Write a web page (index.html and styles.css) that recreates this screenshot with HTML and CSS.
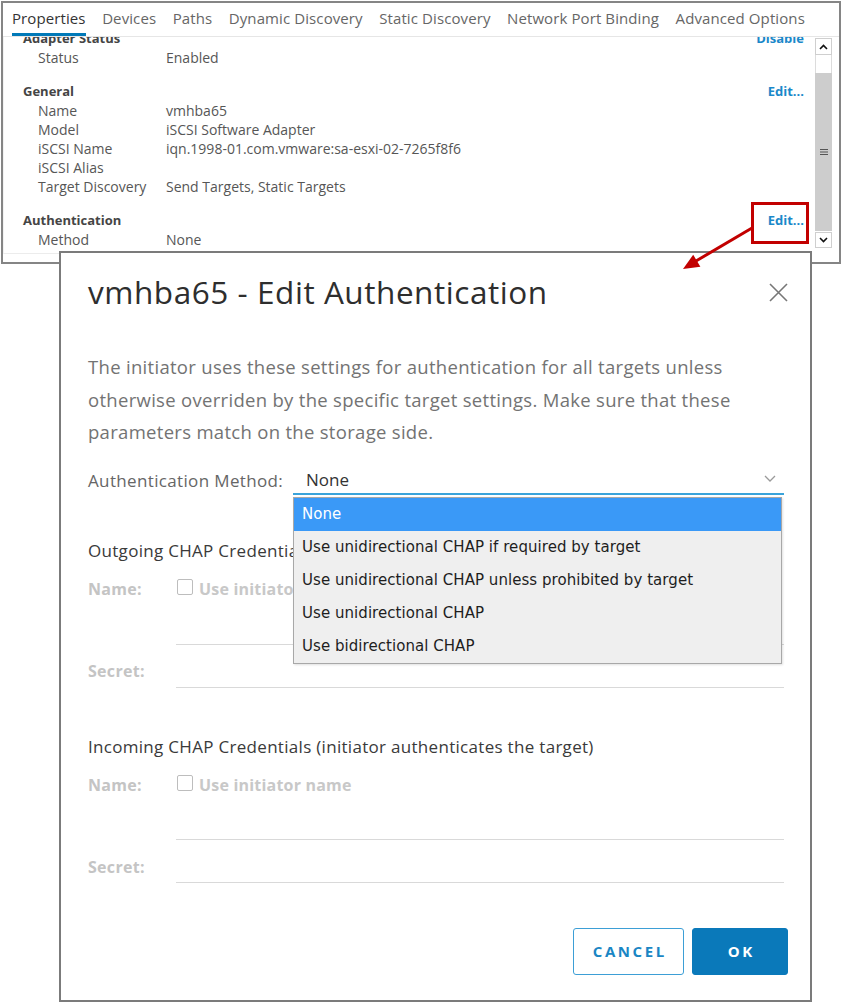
FILE: index.html
```html
<!DOCTYPE html>
<html lang="en">
<head>
<meta charset="utf-8">
<title>vmhba65 - Edit Authentication</title>
<link rel="stylesheet" href="styles.css">
</head>
<body>
<div class="page">
  <div class="panel">
    <nav class="tabs">
      <span class="tab active">Properties</span>
      <span class="tab">Devices</span>
      <span class="tab">Paths</span>
      <span class="tab">Dynamic Discovery</span>
      <span class="tab">Static Discovery</span>
      <span class="tab">Network Port Binding</span>
      <span class="tab">Advanced Options</span>
    </nav>
    <div class="panel-body">
      <div class="props">
        <div class="props-inner">
          <section class="sec">
            <div class="sec-head"><span class="sec-title">Adapter Status</span><span class="link">Disable</span></div>
            <div class="row"><span class="k">Status</span><span class="v">Enabled</span></div>
          </section>
          <section class="sec">
            <div class="sec-head"><span class="sec-title">General</span><span class="link">Edit...</span></div>
            <div class="row"><span class="k">Name</span><span class="v">vmhba65</span></div>
            <div class="row"><span class="k">Model</span><span class="v">iSCSI Software Adapter</span></div>
            <div class="row"><span class="k">iSCSI Name</span><span class="v">iqn.1998-01.com.vmware:sa-esxi-02-7265f8f6</span></div>
            <div class="row"><span class="k">iSCSI Alias</span><span class="v"></span></div>
            <div class="row"><span class="k">Target Discovery</span><span class="v">Send Targets, Static Targets</span></div>
          </section>
          <section class="sec">
            <div class="sec-head"><span class="sec-title">Authentication</span><span class="link">Edit...</span></div>
            <div class="row"><span class="k">Method</span><span class="v">None</span></div>
          </section>
        </div>
      </div>
      <div class="scrollbar">
        <div class="sb-btn"><svg width="9" height="6" viewBox="0 0 9 6"><polyline points="1,5 4.5,1.5 8,5" fill="none" stroke="#111" stroke-width="1.6"/></svg></div>
        <div class="sb-track"></div>
        <div class="sb-thumb"><svg width="8" height="8" viewBox="0 0 8 8"><path d="M0 1.5H8M0 4H8M0 6.5H8" stroke="#555" stroke-width="1.2"/></svg></div>
        <div class="sb-btn down"><svg width="9" height="6" viewBox="0 0 9 6"><polyline points="1,1 4.5,4.5 8,1" fill="none" stroke="#111" stroke-width="1.6"/></svg></div>
      </div>
    </div>
  </div>

  <div class="modal">
    <div class="modal-head">
      <h1 class="modal-title">vmhba65 - Edit Authentication</h1>
      <svg class="close" width="19" height="19" viewBox="0 0 19 19"><path d="M1 1L18 18M18 1L1 18" stroke="#777" stroke-width="1.6"/></svg>
    </div>
    <p class="desc">The initiator uses these settings for authentication for all targets unless otherwise overriden by the specific target settings. Make sure that these parameters match on the storage side.</p>
    <div class="method-row">
      <span class="method-label">Authentication Method:</span>
      <div class="select">
        <span class="select-value">None</span>
        <svg class="chev" width="12" height="7" viewBox="0 0 12 7"><polyline points="1,1 6,6 11,1" fill="none" stroke="#9a9a9a" stroke-width="1.3"/></svg>
        <ul class="dropdown">
          <li class="opt selected">None</li>
          <li class="opt">Use unidirectional CHAP if required by target</li>
          <li class="opt">Use unidirectional CHAP unless prohibited by target</li>
          <li class="opt">Use unidirectional CHAP</li>
          <li class="opt">Use bidirectional CHAP</li>
        </ul>
      </div>
    </div>

    <h2 class="cred-title first">Outgoing CHAP Credentials (target authenticates the initiator)</h2>
    <div class="field-row"><span class="f-label">Name:</span><span class="check"></span><span class="check-label">Use initiator name</span></div>
    <div class="line-input name-input"></div>
    <div class="secret-row"><span class="f-label">Secret:</span><div class="line-input secret-input"></div></div>

    <h2 class="cred-title second">Incoming CHAP Credentials (initiator authenticates the target)</h2>
    <div class="field-row"><span class="f-label">Name:</span><span class="check"></span><span class="check-label">Use initiator name</span></div>
    <div class="line-input name-input short"></div>
    <div class="secret-row last"><span class="f-label">Secret:</span><div class="line-input secret-input short"></div></div>

    <div class="actions">
      <button class="btn btn-outline">CANCEL</button>
      <button class="btn btn-primary">OK</button>
    </div>
  </div>

  <div class="callout"></div>
  <svg class="arrow" width="90" height="60" viewBox="0 0 90 60">
    <line x1="77" y1="13" x2="21" y2="46" stroke="#c20000" stroke-width="3"/>
    <polygon points="8,54 25.4,51.8 18.2,39.8" fill="#c20000"/>
  </svg>
</div>
</body>
</html>
```

FILE: styles.css
```css
* { box-sizing: border-box; }
html, body { margin: 0; padding: 0; background: #fff; }
body { font-family: "Open Sans", Lato, sans-serif; color: #333; }

.page { position: relative; width: 843px; height: 1002px; overflow: hidden; }

/* ---------- top properties panel ---------- */
.panel {
  margin: 1px 0 0 1px;
  width: 840px;
  height: 263px;
  border: 2px solid #858585;
  background: #fff;
  display: flex;
  flex-direction: column;
}
.tabs {
  display: flex;
  gap: 16.5px;
  padding-left: 9px;
  height: 34px;
  border-bottom: 1px solid #e6e6e6;
  flex-shrink: 0;
}
.tab {
  font-size: 15px;
  letter-spacing: 0.1px;
  line-height: 28px;
  padding-top: 1px;
  height: 33px;
  color: #666;
  border-bottom: 3px solid transparent;
  white-space: nowrap;
}
.tab.active { color: #333; border-bottom-color: #0079b8; }

.panel-body { display: flex; flex: 1; min-height: 0; }
.props {
  width: 808px;
  height: 217px;
  overflow: hidden;
  border-bottom: 1px solid #ececec;
  border-left: 1px solid #f2f2f2;
}
.props-inner { margin-top: -8px; padding: 0 7px 0 19px; }
.sec { margin-bottom: 15px; }
.sec-head { display: flex; justify-content: space-between; line-height: 19px; }
.sec-title { font-size: 13px; font-weight: 700; color: #454545; }
.link { font-size: 13px; font-weight: 700; color: #1b88c9; }
.row { display: flex; line-height: 19px; font-size: 14px; color: #565656; padding-left: 15px; }
.k { width: 128px; flex-shrink: 0; }

.scrollbar {
  margin: 1px 0 0 4px;
  width: 17px;
  height: 210px;
  display: flex;
  flex-direction: column;
}
.sb-btn {
  height: 17px;
  border: 1px solid #cfcfcf;
  background: #fff;
  display: flex;
  align-items: center;
  justify-content: center;
}
.sb-btn.down { height: 16px; margin-top: 1px; }
.sb-track { height: 18px; border-left: 1px solid #dcdcdc; border-right: 1px solid #dcdcdc; background: #fff; }
.sb-thumb {
  flex: 1;
  background: #cdcdcd;
  display: flex;
  align-items: center;
  justify-content: center;
}

/* ---------- modal ---------- */
.modal {
  position: absolute;
  left: 59px;
  top: 251px;
  width: 753px;
  height: 751px;
  border: 2px solid #7b7b7b;
  background: #fff;
  padding: 19px 22px 0 27px;
  z-index: 2;
}
.modal-head { display: flex; justify-content: space-between; align-items: center; height: 40px; }
.modal-title { margin: 0; font-size: 31.5px; font-weight: 400; color: #2e2e2e; line-height: 40px; letter-spacing: 0.55px; }
.close { flex-shrink: 0; }

.desc {
  margin: 39px 0 0 0;
  font-size: 18.5px;
  line-height: 32.5px;
  color: #737373;
  width: 700px;
  letter-spacing: 0.3px;
}

.method-row { display: flex; margin-top: 18px; height: 28px; }
.method-label { width: 205px; font-size: 17px; line-height: 28px; color: #666; letter-spacing: 0.35px; flex-shrink: 0; }
.select {
  position: relative;
  flex: 1;
  margin-right: 4px;
  height: 28px;
  border-bottom: 2px solid #3aa3da;
  display: flex;
  align-items: center;
  justify-content: space-between;
  padding: 0 8px 0 13px;
}
.select-value { font-size: 17px; line-height: 26px; color: #333; }
.chev { margin-bottom: 2px; }

.dropdown {
  position: absolute;
  left: 0;
  top: 30px;
  width: 489px;
  margin: 0;
  padding: 0;
  list-style: none;
  background: #efefef;
  border: 1px solid #a8a8a8;
  box-shadow: 1px 1px 2px rgba(0,0,0,0.12);
  z-index: 3;
}
.opt {
  height: 33px;
  line-height: 33px;
  padding-left: 8px;
  font-family: "DejaVu Sans", Verdana, sans-serif;
  font-size: 15px;
  letter-spacing: 0.05px;
  color: #1e1e1e;
  white-space: nowrap;
}
.opt.selected { background: #3a99f7; color: #fff; }

.cred-title { margin: 0; font-size: 17px; font-weight: 400; line-height: 22px; color: #3a3a3a; letter-spacing: 0.3px; white-space: nowrap; }
.cred-title.first { margin-top: 45px; }
.cred-title.second { margin-top: 48px; }

.field-row { display: flex; align-items: center; margin-top: 16px; height: 22px; }
.f-label { width: 89px; flex-shrink: 0; font-size: 16px; font-weight: 700; color: #c4c4c4; line-height: 24px; letter-spacing: 0.3px; }
.check { width: 16px; height: 16px; border: 1px solid #bdbdbd; border-radius: 2px; margin-top: -3px; flex-shrink: 0; }
.check-label { margin-left: 6px; font-size: 16px; font-weight: 700; color: #c8c8c8; letter-spacing: 0.2px; }

.line-input { border-bottom: 1px solid #d9d9d9; }
.name-input { margin-left: 88px; margin-right: 4px; height: 45px; }
.name-input.short { height: 44px; }
.secret-row { display: flex; margin-top: 14px; height: 29px; margin-right: 4px; }
.secret-row.last { margin-top: 15px; height: 28px; }
.secret-row .f-label { width: 88px; line-height: 24px; }
.secret-input { flex: 1; height: 29px; }
.secret-input.short { height: 28px; }

.actions { display: flex; justify-content: flex-end; gap: 8px; margin-top: 45px; }
.btn {
  height: 47px;
  border-radius: 3px;
  font-family: "Open Sans", Lato, sans-serif;
  font-size: 15px;
  font-weight: 700;
  letter-spacing: 2.6px;
  text-indent: 2.6px;
  cursor: pointer;
}
.btn-outline { width: 111px; background: #fff; color: #1a86c4; border: 1.5px solid #3d9fd6; }
.btn-primary { width: 96px; background: #0a79ba; color: #fff; border: 1px solid #0a79ba; }

/* ---------- annotation ---------- */
.callout {
  position: absolute;
  left: 751px;
  top: 202px;
  width: 58px;
  height: 42px;
  border: 3px solid #c20000;
  z-index: 4;
}
.arrow { position: absolute; left: 675px; top: 215px; z-index: 5; }
```
